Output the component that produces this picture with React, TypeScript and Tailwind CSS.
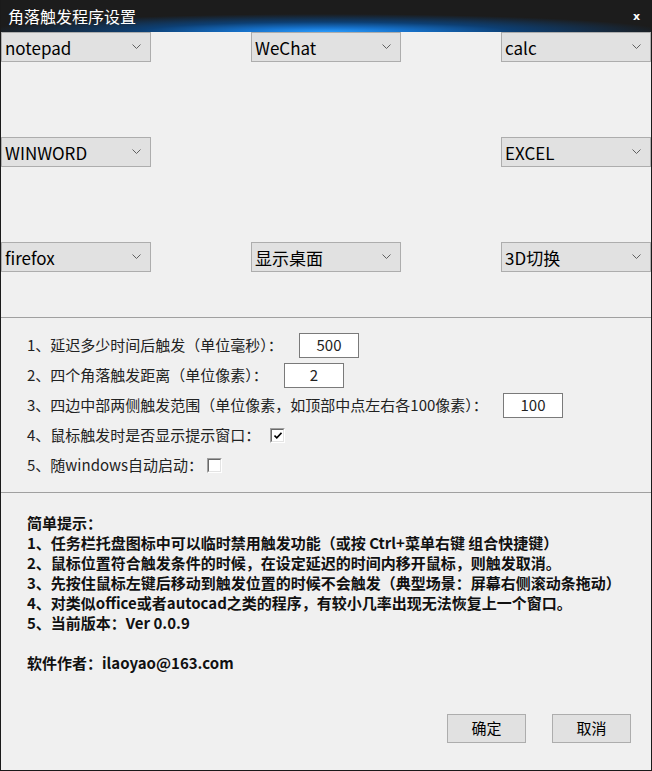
import React from "react";

const font = { fontFamily: '"Noto Sans CJK SC", "Noto Sans", sans-serif' };

function Combo({ label }: { label: string }) {
  return (
    <div className="w-[150px] h-[30px] bg-[#e1e1e1] border border-[#adadad] flex items-center pl-[3px] pr-[8px] justify-between">
      <span className="text-[17px] text-[#000] leading-none">{label}</span>
      <svg width="9" height="6" viewBox="0 0 9 6" className="mr-[1px]">
        <path d="M0.5 0.5 L4.5 4.5 L8.5 0.5" fill="none" stroke="#606060" strokeWidth="1" />
      </svg>
    </div>
  );
}

function NumInput({ value }: { value: string }) {
  return (
    <div className="w-[60px] h-[25px] bg-white border border-[#7a7a7a] flex items-center justify-center text-[15px] text-[#222]">
      {value}
    </div>
  );
}

function Check({ checked }: { checked?: boolean }) {
  return (
    <div className="w-[15px] h-[15px] border-t border-l border-[#a0a0a0] border-r border-b border-r-white border-b-white bg-white">
      <div className="w-full h-full border-t border-l border-[#696969] border-r border-b border-r-[#e3e3e3] border-b-[#e3e3e3] flex items-center justify-center">
        {checked && (
          <svg width="8" height="7" viewBox="0 0 8 7">
            <path d="M0.5 3.5 L2.8 5.8 L7.5 0.8" fill="none" stroke="#000" strokeWidth="1.6" />
          </svg>
        )}
      </div>
    </div>
  );
}

export default function App() {
  return (
    <div style={font} className="w-[652px] h-[771px] bg-[#f0f0f0] border-l border-r border-b border-[#1a1a1a] flex flex-col overflow-hidden">
      {/* title bar */}
      <div className="h-[32px] -mx-px bg-[#1c1c1c] relative flex items-center justify-between pl-[8px] pr-[12px] bg-[radial-gradient(ellipse_340px_18px_at_50%_100%,#2a9cff_0%,#1670c8_25%,#0d3f73_55%,#1c1c1c_100%)]">
        <span className="text-white text-[16px] leading-none">角落触发程序设置</span>
        <span className="text-white text-[11px] font-bold leading-none" style={{ fontFamily: '"DejaVu Sans", sans-serif' }}>x</span>
      </div>

      {/* combos */}
      <div className="flex justify-between">
        <Combo label="notepad" />
        <Combo label="WeChat" />
        <Combo label="calc" />
      </div>
      <div className="flex justify-between mt-[75px]">
        <Combo label="WINWORD" />
        <Combo label="EXCEL" />
      </div>
      <div className="flex justify-between mt-[75px]">
        <Combo label="firefox" />
        <Combo label="显示桌面" />
        <Combo label="3D切换" />
      </div>

      <div className="h-px bg-[#a0a0a0] mt-[45px]" />

      {/* settings */}
      <div className="pl-[26px] pt-[12px] text-[15px] text-[#222]">
        <div className="h-[30px] flex items-center">
          <span className="w-[272px]">1、延迟多少时间后触发（单位毫秒）：</span>
          <NumInput value="500" />
        </div>
        <div className="h-[30px] flex items-center">
          <span className="w-[257px]">2、四个角落触发距离（单位像素）：</span>
          <NumInput value="2" />
        </div>
        <div className="h-[30px] flex items-center">
          <span className="w-[476px]">3、四边中部两侧触发范围（单位像素，如顶部中点左右各100像素）：</span>
          <NumInput value="100" />
        </div>
        <div className="h-[30px] flex items-center">
          <span className="w-[243px]">4、鼠标触发时是否显示提示窗口：</span>
          <Check checked />
        </div>
        <div className="h-[30px] flex items-center">
          <span className="w-[180px]">5、随windows自动启动：</span>
          <Check />
        </div>
      </div>

      <div className="h-px bg-[#a0a0a0] mt-[12px]" />

      {/* hints */}
      <div className="pl-[26px] pt-[20px] text-[15px] font-bold text-[#111] leading-[20px]">
        <div>简单提示：</div>
        <div>1、任务栏托盘图标中可以临时禁用触发功能（或按 Ctrl+菜单右键 组合快捷键）</div>
        <div>2、鼠标位置符合触发条件的时候，在设定延迟的时间内移开鼠标，则触发取消。</div>
        <div>3、先按住鼠标左键后移动到触发位置的时候不会触发（典型场景：屏幕右侧滚动条拖动）</div>
        <div>4、对类似office或者autocad之类的程序，有较小几率出现无法恢复上一个窗口。</div>
        <div>5、当前版本：Ver 0.0.9</div>
        <div className="h-[20px]" />
        <div>软件作者：ilaoyao@163.com</div>
      </div>

      {/* buttons */}
      <div className="flex justify-end gap-[26px] pr-[20px] mt-[41px]">
        <div className="w-[79px] h-[29px] bg-[#e1e1e1] border border-[#adadad] flex items-center justify-center text-[15px] text-black">确定</div>
        <div className="w-[79px] h-[29px] bg-[#e1e1e1] border border-[#adadad] flex items-center justify-center text-[15px] text-black">取消</div>
      </div>
    </div>
  );
}
